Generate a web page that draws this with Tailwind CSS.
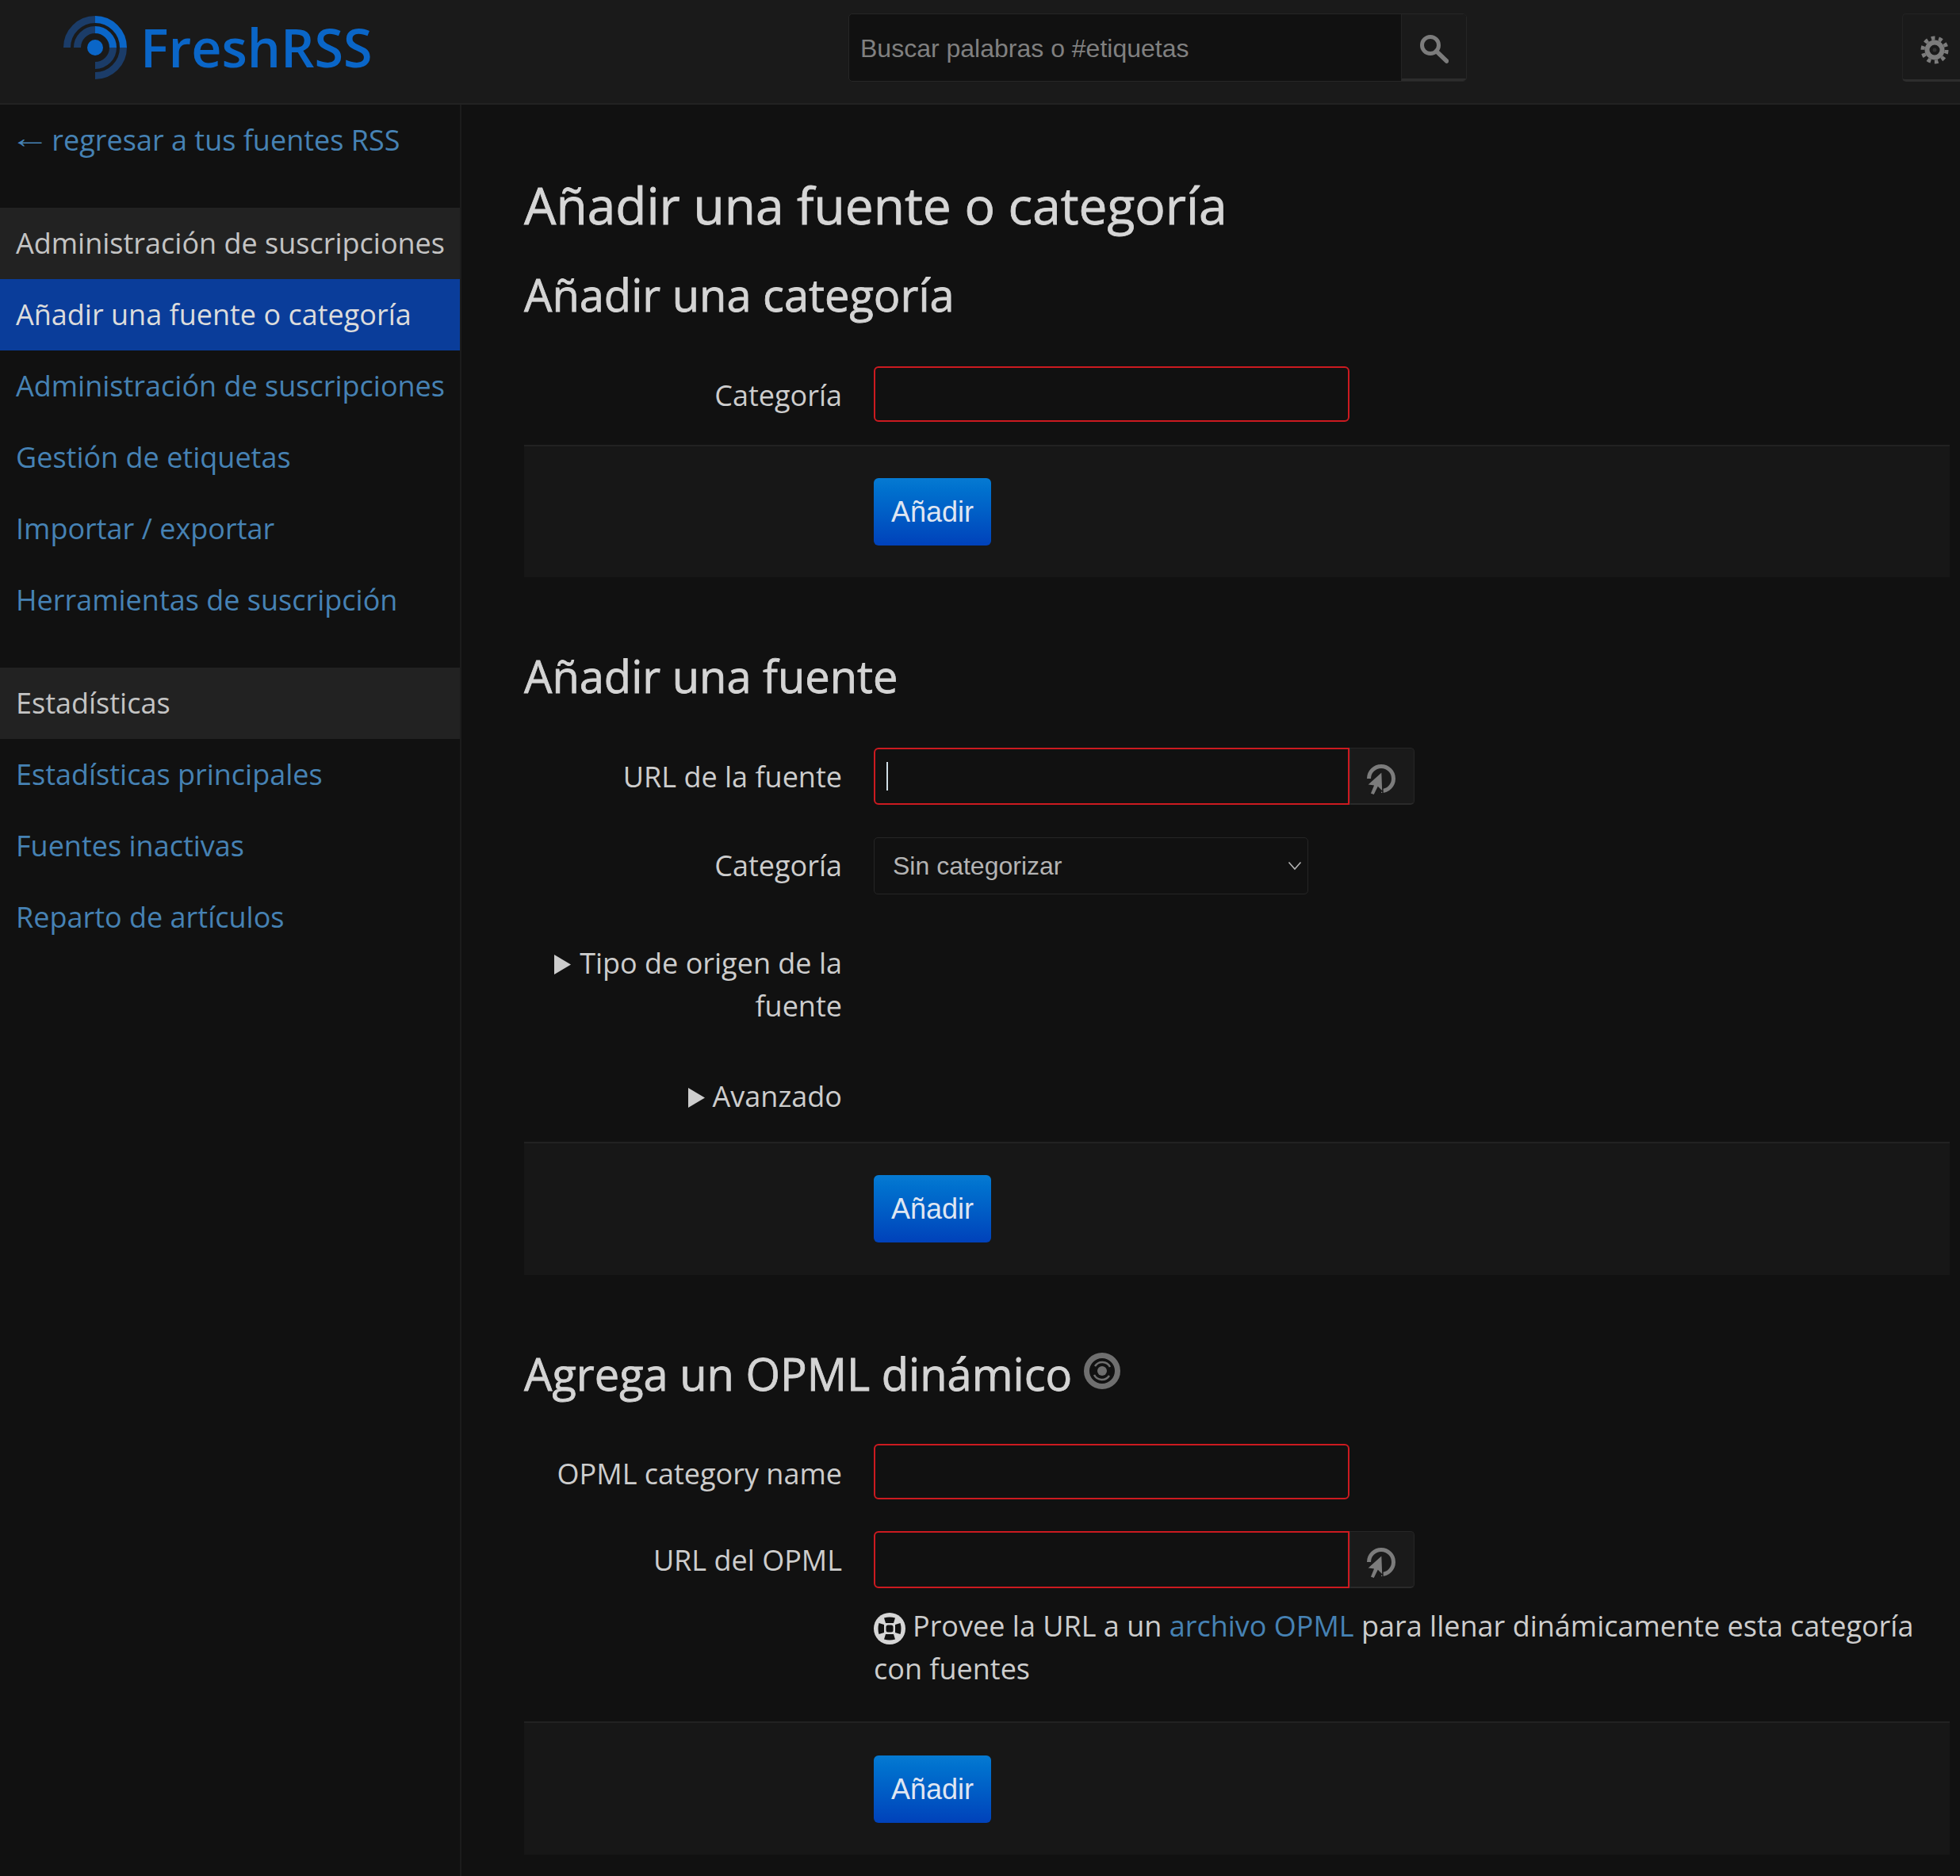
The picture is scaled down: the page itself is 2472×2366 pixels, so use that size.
<!DOCTYPE html>
<html lang="es">
<head>
<meta charset="utf-8">
<title>FreshRSS</title>
<script src="https://cdn.jsdelivr.net/npm/@tailwindcss/browser@4"></script>
</head>
<body class="m-0 bg-[#111111] font-['Open_Sans',sans-serif] text-[#cdcdcd]">
<div class="w-[2472px] h-[2366px] overflow-hidden flex flex-col">
  <header class="h-[132px] shrink-0 bg-[#1a1a1a] border-b-2 border-[#222222] flex items-start">
    <div class="w-[1070px] h-[120px] shrink-0 flex items-center pl-[80px] gap-[17px]">
      <svg width="80" height="80" viewBox="0 0 80 80" class="shrink-0">
        <circle cx="40" cy="40" r="10" fill="#0a66c8"/>
        <path d="M40 4.500 A35.500 35.500 0 0 1 75.500 40 M40 17.500 A22.500 22.500 0 0 1 62.500 40" fill="none" stroke="#0a66c8" stroke-width="9"/>
        <path d="M4.500 40 A35.500 35.500 0 0 1 40 4.500 M75.500 40 A35.500 35.500 0 0 1 40 75.500 M17.500 40 A22.500 22.500 0 0 1 40 17.500 M62.500 40 A22.500 22.500 0 0 1 40 62.500" fill="none" stroke="#1b3c68" stroke-width="9"/>
      </svg>
      <span class="text-[#0a66c8] text-[66.500px] font-semibold leading-none -mt-[2px]">FreshRSS</span>
    </div>
    <div class="mt-[17px] w-[780px] h-[86px] flex rounded-[5px] border border-[#262626] bg-[#111111] overflow-hidden">
      <input placeholder="Buscar palabras o #etiquetas" class="flex-1 min-w-0 pl-[14px] pt-[1px] bg-transparent outline-none font-['Liberation_Sans',sans-serif] text-[32px] text-[#cdcdcd] placeholder:text-[#808080]">
      <div class="w-[82px] shrink-0 flex items-center justify-center pt-[7px] bg-[#1a1a1a] border-l border-[#232323] border-b-[3px] border-b-[#2d2d2d]">
        <svg width="36" height="36" viewBox="0 0 36 36"><circle cx="13" cy="13" r="10.500" fill="none" stroke="#7c7c7c" stroke-width="5"/><path d="M20.500 20.500 L33.500 33" stroke="#7c7c7c" stroke-width="5.500" stroke-linecap="round"/></svg>
      </div>
    </div>
    <div class="ml-auto mt-[17px] w-[73px] h-[86px] flex items-center pl-[22px] pt-[8px] rounded-l-[5px] border border-r-0 border-[#232323] border-b-[3px] border-b-[#2d2d2d] bg-[#1a1a1a]">
      <svg width="36" height="36" viewBox="0 0 36 36"><circle cx="18" cy="18" r="15" fill="none" stroke="#7c7c7c" stroke-width="5" stroke-dasharray="4.712 4.712"/><circle cx="18" cy="18" r="9.500" fill="none" stroke="#7c7c7c" stroke-width="6"/><circle cx="18" cy="18" r="2.500" fill="#333333"/></svg>
    </div>
  </header>

  <div class="flex flex-1 min-h-0">
    <aside class="w-[582px] shrink-0 bg-[#111111] border-r-2 border-[#1c1c1c] text-[36px] leading-[50px]">
      <div class="h-[130px] pl-[20px] pt-[20px] text-[#4682b4] whitespace-nowrap"><a><span class="inline-block w-[36px] font-['Liberation_Sans',sans-serif] scale-x-[1.4] -translate-y-[4px]">←</span> regresar a tus fuentes RSS</a></div>
      <div class="h-[90px] pl-[20px] flex items-center bg-[#222222] text-[#c4c4c4] whitespace-nowrap">Administración de suscripciones</div>
      <div class="h-[90px] pl-[20px] flex items-center bg-[#0a3d9a] text-[#dcdcdc]">Añadir una fuente o categoría</div>
      <div class="h-[90px] pl-[20px] flex items-center text-[#4682b4] whitespace-nowrap">Administración de suscripciones</div>
      <div class="h-[90px] pl-[20px] flex items-center text-[#4682b4]">Gestión de etiquetas</div>
      <div class="h-[90px] pl-[20px] flex items-center text-[#4682b4]">Importar / exportar</div>
      <div class="h-[90px] pl-[20px] flex items-center text-[#4682b4]">Herramientas de suscripción</div>
      <div class="h-[90px] mt-[40px] pl-[20px] flex items-center bg-[#222222] text-[#c4c4c4]">Estadísticas</div>
      <div class="h-[90px] pl-[20px] flex items-center text-[#4682b4]">Estadísticas principales</div>
      <div class="h-[90px] pl-[20px] flex items-center text-[#4682b4]">Fuentes inactivas</div>
      <div class="h-[90px] pl-[20px] flex items-center text-[#4682b4]">Reparto de artículos</div>
    </aside>

    <main class="flex-1 min-w-0 pl-[79px] pr-[13px] text-[36px] leading-[54px]">
      <h1 class="m-0 mt-[82px] text-[64px] leading-[90px] font-medium text-[#d6d6d6] [-webkit-text-stroke:0.8px_#d6d6d6] whitespace-nowrap">Añadir una fuente o categoría</h1>
      <h2 class="m-0 mt-[32px] text-[56px] leading-[70px] font-medium text-[#d4d4d4] [-webkit-text-stroke:0.8px_#d4d4d4]">Añadir una categoría</h2>

      <div class="mt-[56px] flex">
        <div class="w-[401px] shrink-0 text-right pt-[10px]">Categoría</div>
        <div class="ml-[40px] w-[600px] h-[70px] rounded-[6px] border-2 border-[#cc1a20] bg-[#111111]"></div>
      </div>
      <div class="mt-[29px] h-[167px] bg-[#171717] border-t-2 border-[#222222] pl-[441px] pt-[40px]">
        <div class="w-[148px] h-[85px] rounded-[6px] bg-gradient-to-b from-[#067ad2] to-[#0041ba] flex items-center justify-center font-['Liberation_Sans',sans-serif] text-[36px] text-[#dfe6f2]">Añadir</div>
      </div>

      <h2 class="m-0 mt-[89px] text-[56px] leading-[70px] font-medium text-[#d4d4d4] [-webkit-text-stroke:0.8px_#d4d4d4]">Añadir una fuente</h2>
      <div class="mt-[56px] flex">
        <div class="w-[401px] shrink-0 text-right pt-[10px]">URL de la fuente</div>
        <div class="ml-[40px] w-[600px] h-[72px] rounded-l-[6px] border-2 border-[#cc1a20] flex items-center pl-[14px]"><div class="w-[2px] h-[36px] bg-[#cfdde5]"></div></div>
        <div class="w-[82px] h-[72px] rounded-r-[5px] bg-[#1a1a1a] border border-[#262626] border-b-2 border-b-[#2a2a2a] flex items-center justify-center pt-[7px] pr-[2px]">
          <svg width="44" height="44" viewBox="0 0 44 44"><path d="M22 37.500 A15.500 15.500 0 1 0 6.500 22" fill="none" stroke="#7c7c7c" stroke-width="5"/><path fill="#7c7c7c" stroke="#1a1a1a" stroke-width="1.500" d="M23 13 L24 39 L18 33 L13 43 L8 41 L12 31 L4 30 Z"/></svg>
        </div>
      </div>
      <div class="mt-[41px] flex">
        <div class="w-[401px] shrink-0 text-right pt-[9px]">Categoría</div>
        <div class="ml-[40px] w-[548px] h-[72px] rounded-[5px] border border-[#262626] flex items-center justify-between pl-[23px] pr-[7px] font-['Liberation_Sans',sans-serif] text-[32px] text-[#b4b4b4]">
          <span>Sin categorizar</span>
          <svg width="18" height="12" viewBox="0 0 18 12"><path d="M1.500 1.500 L9 10 L16.500 1.500" fill="none" stroke="#b4b4b4" stroke-width="1.600"/></svg>
        </div>
      </div>
      <div class="mt-[60px] flex">
        <div class="w-[401px] shrink-0 text-right">
          <svg width="21" height="25" viewBox="0 0 21 25" class="inline-block mr-[11px] align-[-1px]"><path d="M0 0 L21 12.500 L0 25 Z" fill="#cdcdcd"/></svg>Tipo de origen de la fuente
        </div>
      </div>
      <div class="mt-[60px] flex">
        <div class="w-[401px] shrink-0 text-right">
          <svg width="21" height="25" viewBox="0 0 21 25" class="inline-block mr-[10px] align-[-1px]"><path d="M0 0 L21 12.500 L0 25 Z" fill="#cdcdcd"/></svg>Avanzado
        </div>
      </div>
      <div class="mt-[30px] h-[168px] bg-[#171717] border-t-2 border-[#222222] pl-[441px] pt-[40px]">
        <div class="w-[148px] h-[85px] rounded-[6px] bg-gradient-to-b from-[#067ad2] to-[#0041ba] flex items-center justify-center font-['Liberation_Sans',sans-serif] text-[36px] text-[#dfe6f2]">Añadir</div>
      </div>

      <h2 class="m-0 mt-[89px] text-[56px] leading-[70px] font-medium text-[#d4d4d4] [-webkit-text-stroke:0.8px_#d4d4d4] flex items-center">Agrega un OPML dinámico
        <svg width="46" height="46" viewBox="0 0 46 46" class="ml-[15px] -mt-[6px]"><circle cx="23" cy="23" r="19.500" fill="none" stroke="#6f6f6f" stroke-width="7"/><path d="M14 17 A11 11 0 0 1 33 18 M32 29 A11 11 0 0 1 13 28" fill="none" stroke="#6f6f6f" stroke-width="2.500"/><circle cx="23" cy="23" r="6" fill="#6f6f6f"/></svg>
      </h2>
      <div class="mt-[54px] flex">
        <div class="w-[401px] shrink-0 text-right pt-[11px]">OPML category name</div>
        <div class="ml-[40px] w-[600px] h-[70px] rounded-[6px] border-2 border-[#cc1a20]"></div>
      </div>
      <div class="mt-[40px] flex">
        <div class="w-[401px] shrink-0 text-right pt-[10px]">URL del OPML</div>
        <div class="ml-[40px] w-[600px] h-[72px] rounded-l-[6px] border-2 border-[#cc1a20]"></div>
        <div class="w-[82px] h-[72px] rounded-r-[5px] bg-[#1a1a1a] border border-[#262626] border-b-2 border-b-[#2a2a2a] flex items-center justify-center pt-[7px] pr-[2px]">
          <svg width="44" height="44" viewBox="0 0 44 44"><path d="M22 37.500 A15.500 15.500 0 1 0 6.500 22" fill="none" stroke="#7c7c7c" stroke-width="5"/><path fill="#7c7c7c" stroke="#1a1a1a" stroke-width="1.500" d="M23 13 L24 39 L18 33 L13 43 L8 41 L12 31 L4 30 Z"/></svg>
        </div>
      </div>
      <p class="m-0 mt-[21px] ml-[441px]">
        <svg width="40" height="40" viewBox="0 0 40 40" class="inline-block mr-[9px] align-[-10px]"><circle cx="20" cy="20" r="20" fill="#d6d6d6"/><path fill="#111111" d="M13 6.500 Q20 4.500 27 6.500 L25 13 H15 Z M13 33.500 Q20 35.500 27 33.500 L25 27 H15 Z M6.500 13 Q4.500 20 6.500 27 L13 25 V15 Z M33.500 13 Q35.500 20 33.500 27 L27 25 V15 Z"/><rect x="15.500" y="15.500" width="9" height="9" rx="2.500" fill="#111111"/></svg>Provee la URL a un <a class="text-[#4682b4]">archivo OPML</a> para llenar dinámicamente esta categoría con fuentes
      </p>
      <div class="mt-[39px] h-[168px] bg-[#171717] border-t-2 border-[#222222] pl-[441px] pt-[41px]">
        <div class="w-[148px] h-[85px] rounded-[6px] bg-gradient-to-b from-[#067ad2] to-[#0041ba] flex items-center justify-center font-['Liberation_Sans',sans-serif] text-[36px] text-[#dfe6f2]">Añadir</div>
      </div>
    </main>
  </div>
</div>
</body>
</html>
